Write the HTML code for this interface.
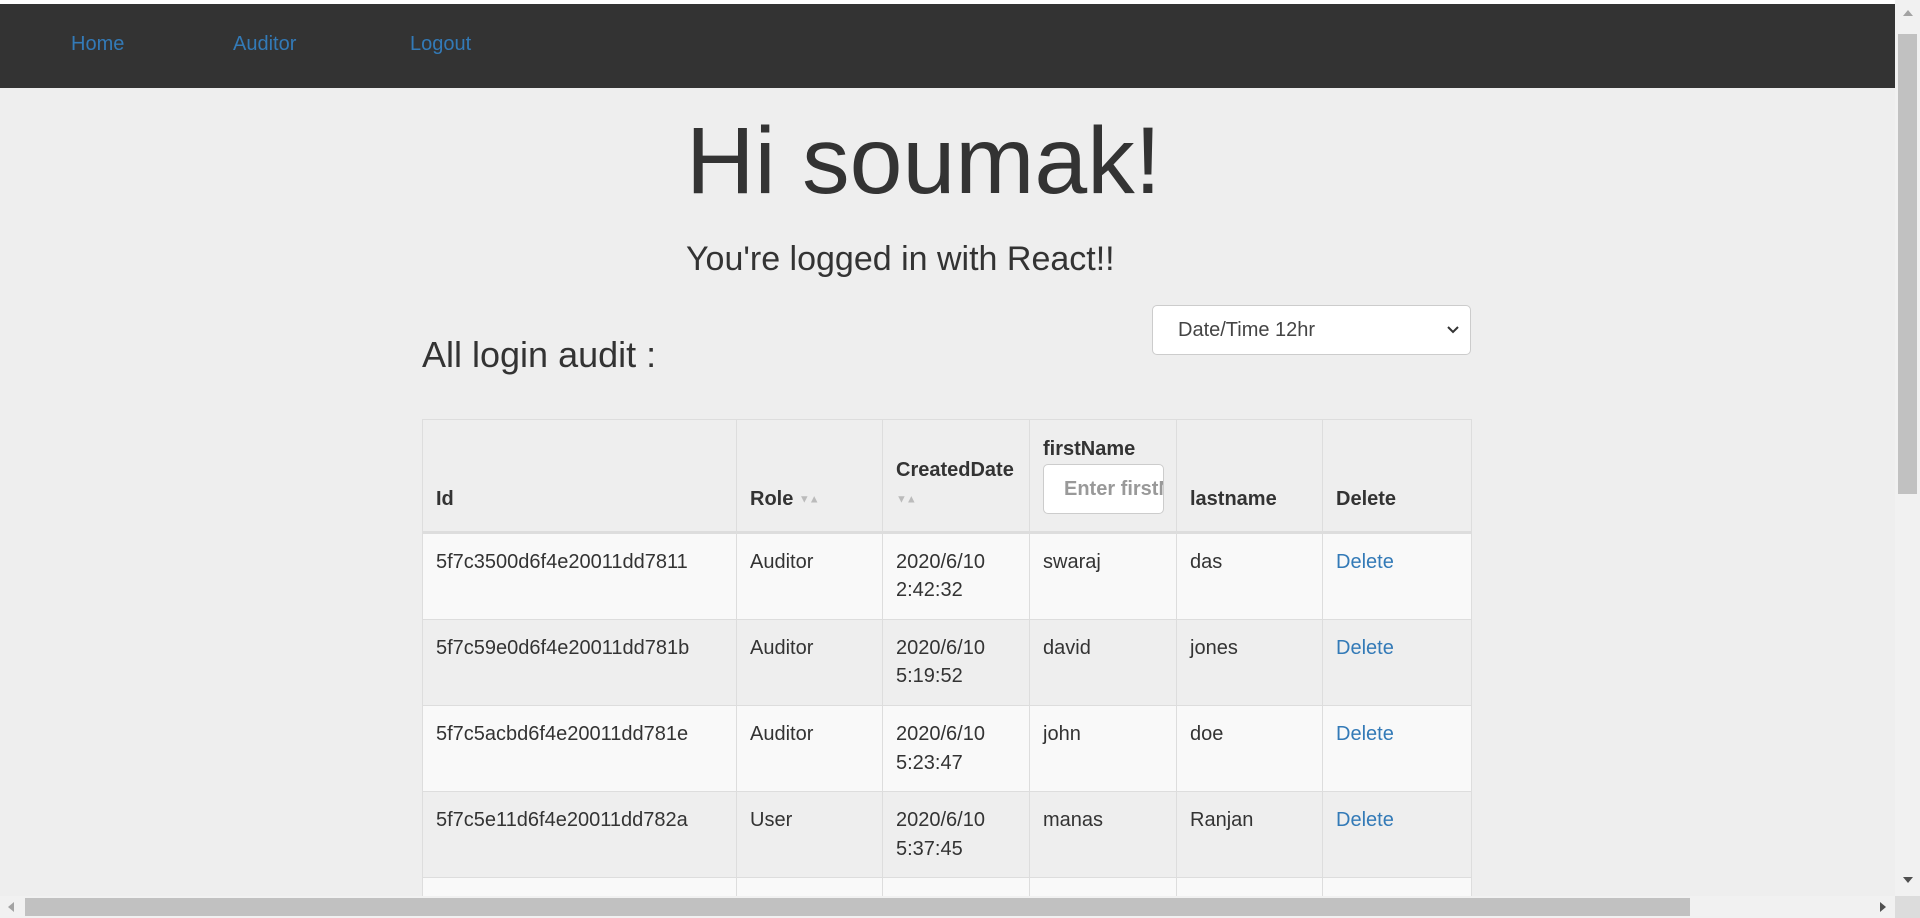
<!DOCTYPE html>
<html><head><meta charset="utf-8"><style>
*{box-sizing:border-box;margin:0;padding:0}
html,body{width:1920px;height:918px;overflow:hidden;background:#eee;font-family:"Liberation Sans",Arial,sans-serif;color:#333}
#wrap{position:absolute;left:0;top:0;width:1920px;height:918px;overflow:hidden}
.top{position:absolute;left:0;top:0;width:1895px;height:4px;background:#fff}
nav{position:absolute;left:0;top:4px;width:1895px;height:84px;background:#333}
nav a{position:absolute;top:28px;font-size:20px;color:#337ab7;text-decoration:none;line-height:24px}
h1{position:absolute;left:686px;top:101px;font-size:95px;font-weight:normal;line-height:120px;white-space:nowrap}
.sub{position:absolute;left:686px;top:239px;font-size:34px;line-height:40px;white-space:nowrap}
h3{position:absolute;left:422px;top:334px;font-size:36px;font-weight:normal;line-height:42px}
.sel{position:absolute;left:1152px;top:305px;width:319px;height:50px;background:#fff;border:1px solid #ccc;border-radius:5px;font-size:20px;line-height:48px;padding-left:25px;color:#444}
.sel svg{position:absolute;right:10px;top:19px}
table{position:absolute;left:422px;top:419px;width:1049px;border-collapse:collapse;table-layout:fixed;font-size:20px;line-height:28.6px}
td,th{border:1px solid #ddd;padding:14px 13px 14px;vertical-align:top;text-align:left}
th{vertical-align:bottom;font-weight:bold;border-bottom:3px solid #ddd;padding:15px 13px 17px}
tbody tr:nth-child(odd){background:#f9f9f9}
a.l{color:#337ab7;text-decoration:none}
.car{font-size:11px;color:#bbb;letter-spacing:-1px;font-weight:normal;vertical-align:middle}
.inp{display:block;width:121px;height:50px;background:#fff;border:1px solid #ccc;border-radius:5px;font-weight:bold;color:#999;padding:10px 20px;overflow:hidden;white-space:nowrap;font-size:20px;line-height:28px}
.vs{position:absolute;left:1895px;top:0;width:25px;height:896px;background:#f1f1f1}
.vt{position:absolute;left:1898px;top:34px;width:19px;height:460px;background:#c1c1c1}
.hs{position:absolute;left:0;top:896px;width:1920px;height:22px;background:#f1f1f1}
.ht{position:absolute;left:25px;top:898px;width:1665px;height:18px;background:#c1c1c1}
.corner{position:absolute;left:1895px;top:896px;width:25px;height:22px;background:#dcdcdc}
.tri{position:absolute;width:0;height:0}
</style></head><body><div id="wrap">
<div class="top"></div>
<nav><a style="left:71px">Home</a><a style="left:233px">Auditor</a><a style="left:410px">Logout</a></nav>
<h1>Hi soumak!</h1>
<div class="sub">You're logged in with React!!</div>
<h3>All login audit :</h3>
<div class="sel">Date/Time 12hr<svg width="14" height="10" viewBox="0 0 14 10"><path d="M2 2l5 5 5-5" fill="none" stroke="#333" stroke-width="2"/></svg></div>
<table>
<colgroup><col style="width:314px"><col style="width:146px"><col style="width:147px"><col style="width:147px"><col style="width:146px"><col style="width:149px"></colgroup>
<thead><tr>
<th>Id</th>
<th>Role <span class="car">▼▲</span></th>
<th>CreatedDate<br><span class="car">▼▲</span></th>
<th>firstName<div class="inp">Enter firstName</div></th>
<th>lastname</th>
<th>Delete</th>
</tr></thead>
<tbody>
<tr><td>5f7c3500d6f4e20011dd7811</td><td>Auditor</td><td>2020/6/10<br>2:42:32</td><td>swaraj</td><td>das</td><td><a class="l">Delete</a></td></tr>
<tr><td>5f7c59e0d6f4e20011dd781b</td><td>Auditor</td><td>2020/6/10<br>5:19:52</td><td>david</td><td>jones</td><td><a class="l">Delete</a></td></tr>
<tr><td>5f7c5acbd6f4e20011dd781e</td><td>Auditor</td><td>2020/6/10<br>5:23:47</td><td>john</td><td>doe</td><td><a class="l">Delete</a></td></tr>
<tr><td>5f7c5e11d6f4e20011dd782a</td><td>User</td><td>2020/6/10<br>5:37:45</td><td>manas</td><td>Ranjan</td><td><a class="l">Delete</a></td></tr>
<tr><td>&nbsp;</td><td></td><td></td><td></td><td></td><td></td></tr>
</tbody></table>
<div class="vs"></div><div class="vt"></div>
<div class="tri" style="left:1903px;top:10px;border-left:5px solid transparent;border-right:5px solid transparent;border-bottom:6px solid #a3a3a3"></div>
<div class="tri" style="left:1903px;top:877px;border-left:5px solid transparent;border-right:5px solid transparent;border-top:6px solid #505050"></div>
<div class="hs"></div><div class="ht"></div>
<div class="tri" style="left:8px;top:902px;border-top:5px solid transparent;border-bottom:5px solid transparent;border-right:6px solid #a3a3a3"></div>
<div class="tri" style="left:1880px;top:902px;border-top:5px solid transparent;border-bottom:5px solid transparent;border-left:6px solid #505050"></div>
<div class="corner"></div>
</div></body></html>
